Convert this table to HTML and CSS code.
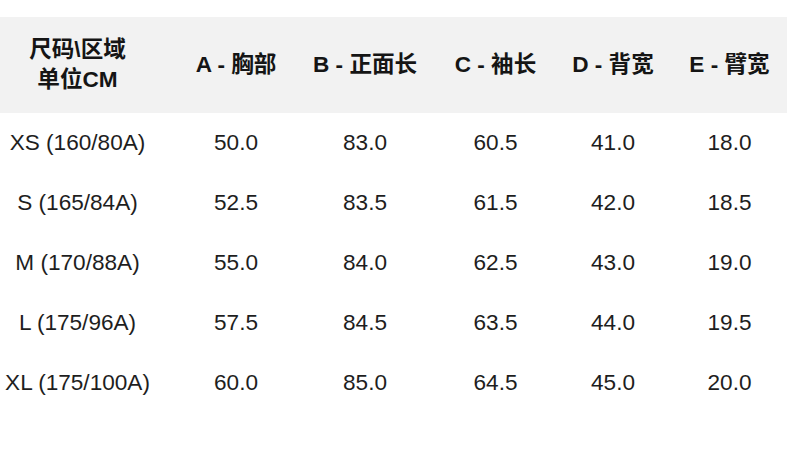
FILE: index.html
```html
<!DOCTYPE html>
<html lang="zh">
<head>
<meta charset="utf-8">
<link rel="stylesheet" href="styles.css">
</head>
<body>
<div class="table">
  <div class="row head">
    <div class="cell c1">尺码\区域<br>单位CM</div>
    <div class="cell">A - 胸部</div>
    <div class="cell">B - 正面长</div>
    <div class="cell">C - 袖长</div>
    <div class="cell">D - 背宽</div>
    <div class="cell">E - 臂宽</div>
  </div>
  <div class="row">
    <div class="cell c1">XS (160/80A)</div>
    <div class="cell">50.0</div>
    <div class="cell">83.0</div>
    <div class="cell">60.5</div>
    <div class="cell">41.0</div>
    <div class="cell">18.0</div>
  </div>
  <div class="row">
    <div class="cell c1">S (165/84A)</div>
    <div class="cell">52.5</div>
    <div class="cell">83.5</div>
    <div class="cell">61.5</div>
    <div class="cell">42.0</div>
    <div class="cell">18.5</div>
  </div>
  <div class="row">
    <div class="cell c1">M (170/88A)</div>
    <div class="cell">55.0</div>
    <div class="cell">84.0</div>
    <div class="cell">62.5</div>
    <div class="cell">43.0</div>
    <div class="cell">19.0</div>
  </div>
  <div class="row">
    <div class="cell c1">L (175/96A)</div>
    <div class="cell">57.5</div>
    <div class="cell">84.5</div>
    <div class="cell">63.5</div>
    <div class="cell">44.0</div>
    <div class="cell">19.5</div>
  </div>
  <div class="row">
    <div class="cell c1">XL (175/100A)</div>
    <div class="cell">60.0</div>
    <div class="cell">85.0</div>
    <div class="cell">64.5</div>
    <div class="cell">45.0</div>
    <div class="cell">20.0</div>
  </div>
</div>
</body>
</html>
```

FILE: styles.css
```css
html, body {
  margin: 0;
  padding: 0;
  background: #ffffff;
  overflow: hidden;
}

body {
  padding-top: 17px;
  font-family: "Liberation Sans", "Noto Sans CJK SC", sans-serif;
  color: #1e1e1e;
}

.table {
  width: 787px;
  display: flex;
  flex-direction: column;
}

.row {
  display: flex;
  align-items: center;
  height: 60px;
  font-size: 22.6px;
  white-space: nowrap;
}

.row.head {
  height: 96px;
  background: #f2f2f2;
  font-weight: bold;
  color: #151515;
}

.cell {
  width: 104px;
  flex: none;
  text-align: center;
}

.cell.c1 {
  width: 155px;
}

.head .cell {
  line-height: 30px;
}

.cell:nth-child(2) { margin-left: 29px; }
.cell:nth-child(3) { margin-left: 25px; }
.cell:nth-child(4) { margin-left: 26.5px; }
.cell:nth-child(5) { margin-left: 13.5px; }
.cell:nth-child(6) { margin-left: 12.5px; }
```
